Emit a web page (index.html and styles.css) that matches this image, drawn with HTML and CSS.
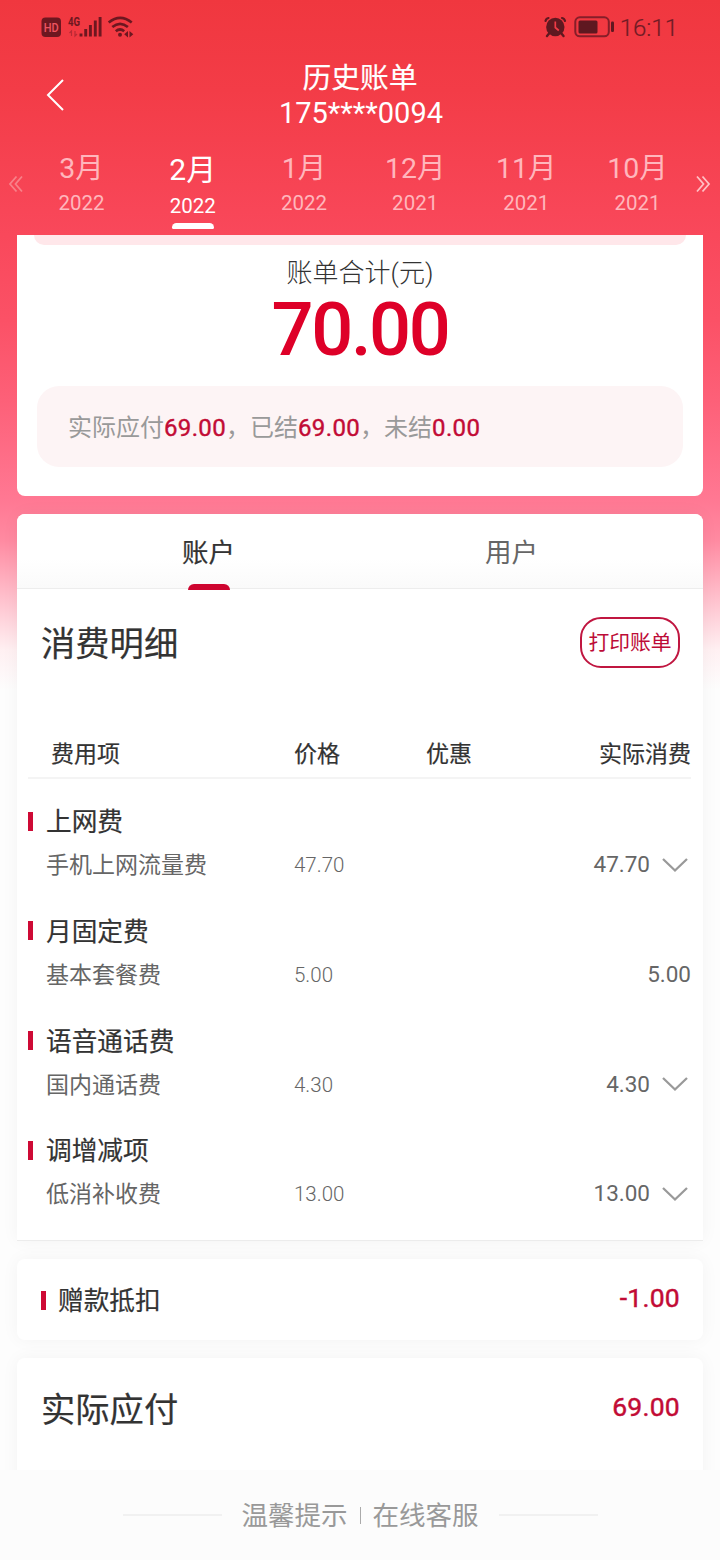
FILE: index.html
```html
<!DOCTYPE html>
<html lang="zh-CN">
<head>
<meta charset="utf-8">
<title>历史账单</title>
<link rel="stylesheet" href="styles.css">
</head>
<body>
<div class="page">
  <header class="header">
    <div class="status">
      <svg class="status-left" width="96" height="28" viewBox="40 14 96 28">
        <rect x="41.500" y="17.500" width="19.500" height="19.500" rx="4" fill="#6d1720"/>
        <text x="51.300" y="31.800" text-anchor="middle" font-size="12.500" textLength="15" lengthAdjust="spacingAndGlyphs" fill="#ee5560" font-weight="500">HD</text>
        <text x="68" y="26" font-size="12.500" textLength="12" lengthAdjust="spacingAndGlyphs" font-weight="700" fill="#6d1720">4G</text>
        <path d="M71.500 36v-5l-2 2M75 31v5l2-2" stroke="#b92935" stroke-width="1.200" fill="none"/>
        <path d="M81 33.500v3M85.700 29v7.500M90.400 25v11.500M95.300 20.500v16M100.100 17v19.500" stroke="#6d1720" stroke-width="2.900" fill="none"/>
        <g fill="none" stroke="#6d1720" stroke-width="2.700">
          <path d="M108.700 22.500q11.500-9.200 23 0M112.300 27q7.800-6.400 15.600 0M115.800 31.300q4.200-3.600 8.400 0"/>
        </g>
        <circle cx="120" cy="34.800" r="2" fill="#6d1720"/>
        <path d="M128 31v6.500l-3.800-3.200zM129.500 31v6.500l3.800-3.200z" fill="#6d1720"/>
      </svg>
      <div class="status-right">
        <svg width="72" height="28" viewBox="543 14 72 28">
          <g stroke="#5f1820" fill="none" stroke-linecap="round">
            <path d="M545.500 21q.5-2.500 3-3M565 21q-.5-2.500-3-3" stroke-width="2.200"/>
            <path d="M549.500 33l-2.500 3M561 33l2.500 3" stroke-width="2.400"/>
          </g>
          <circle cx="555.300" cy="27" r="9.200" fill="#5f1820"/>
          <path d="M555.300 21.500v6l3.500 3" stroke="#f03b45" stroke-width="1.700" fill="none"/>
          <rect x="575.300" y="17.300" width="33.500" height="19" rx="4.500" fill="none" stroke="#861e29" stroke-width="2"/>
          <rect x="578.500" y="20.500" width="19" height="13" rx="1.500" fill="#5f1820"/>
          <rect x="611" y="21.500" width="3" height="10.500" rx="1.200" fill="#5f1820"/>
        </svg>
        <span class="clock">16:11</span>
      </div>
    </div>
    <div class="titlebar">
      <svg class="back" width="20" height="34" viewBox="0 0 20 34"><path d="M18 2L3 17l15 15" fill="none" stroke="#fff" stroke-width="2"/></svg>
      <div class="titles">
        <div class="title">历史账单</div>
        <div class="phone">175****0094</div>
      </div>
    </div>
    <nav class="months">
      <svg class="arrow arrow-off" width="16" height="18" viewBox="0 0 16 18"><path d="M8.500 1.500L2 9l6.500 7.500M14 1.500L7.500 9l6.500 7.500"/></svg>
      <div class="month"><b>3月</b><span>2022</span></div>
      <div class="month active"><b>2月</b><span>2022</span></div>
      <div class="month"><b>1月</b><span>2022</span></div>
      <div class="month"><b>12月</b><span>2021</span></div>
      <div class="month"><b>11月</b><span>2021</span></div>
      <div class="month"><b>10月</b><span>2021</span></div>
      <svg class="arrow" width="16" height="18" viewBox="0 0 16 18"><path d="M2 1.500L8.500 9 2 16.500M7.500 1.500L14 9l-6.500 7.500"/></svg>
    </nav>
  </header>

  <main class="content">
    <section class="card total">
      <div class="strip"></div>
      <div class="total-label">账单合计(元)</div>
      <div class="total-value">70.00</div>
      <div class="summary">实际应付<em>69.00</em>，已结<em>69.00</em>，未结<em>0.00</em></div>
    </section>

    <section class="card detail">
      <div class="tabs">
        <div class="tab selected">账户</div>
        <div class="tab">用户</div>
      </div>
      <div class="detail-head">
        <h2>消费明细</h2>
        <button class="print">打印账单</button>
      </div>
      <div class="table">
        <div class="row thead"><span>费用项</span><span>价格</span><span>优惠</span><span>实际消费</span></div>
        <div class="group">
          <h3>上网费</h3>
          <div class="row item"><span>手机上网流量费</span><span class="price">47.70</span><span></span><span class="real">47.70<svg class="chev" width="28" height="16" viewBox="0 0 28 16"><path d="M2 2l12 11.500L26 2"/></svg></span></div>
        </div>
        <div class="group">
          <h3>月固定费</h3>
          <div class="row item"><span>基本套餐费</span><span class="price">5.00</span><span></span><span class="real">5.00</span></div>
        </div>
        <div class="group">
          <h3>语音通话费</h3>
          <div class="row item"><span>国内通话费</span><span class="price">4.30</span><span></span><span class="real">4.30<svg class="chev" width="28" height="16" viewBox="0 0 28 16"><path d="M2 2l12 11.500L26 2"/></svg></span></div>
        </div>
        <div class="group">
          <h3>调增减项</h3>
          <div class="row item"><span>低消补收费</span><span class="price">13.00</span><span></span><span class="real">13.00<svg class="chev" width="28" height="16" viewBox="0 0 28 16"><path d="M2 2l12 11.500L26 2"/></svg></span></div>
        </div>
      </div>
    </section>

    <section class="card line gift">
      <h3>赠款抵扣</h3>
      <span class="amount">-1.00</span>
    </section>

    <section class="card line due">
      <h2>实际应付</h2>
      <span class="amount">69.00</span>
    </section>
  </main>

  <footer class="footer">
    <i class="rule"></i>
    <span>温馨提示</span><i class="sep"></i><span>在线客服</span>
    <i class="rule"></i>
  </footer>
</div>
</body>
</html>
```

FILE: styles.css
```css
* { box-sizing: border-box; }
body {
  margin: 0;
  font-family: Roboto, "Noto Sans CJK SC", sans-serif;
  color: #333;
}
h2, h3 { margin: 0; font-weight: 400; }
em, i { font-style: normal; }

/* Slightly heavier than regular */
h2, h3, .thead, .selected, .title, .amount, .summary em { -webkit-text-stroke: 0.2px currentColor; }

.page {
  width: 720px;
  height: 1560px;
  overflow: hidden;
  display: flex;
  flex-direction: column;
  background: linear-gradient(180deg, #f0373f 0, #f33c47 90px, #f9485b 235px, #fb5166 320px, #fd6078 400px, #ff7893 500px, #ff8aa1 540px, #ffc2ce 600px, #fff0f2 650px, #fdfdfd 690px, #fdfdfd 100%);
}

/* Header */
.header { height: 235px; flex: none; color: #fff; }
.status {
  height: 54px;
  padding: 14px 42px 0 40px;
  display: flex;
  justify-content: space-between;
  align-items: flex-start;
}
.status-right { display: flex; color: #701b25; }
.clock { width: 63px; line-height: 29px; font-size: 24px; font-weight: 300; text-align: right; white-space: nowrap; -webkit-text-stroke: 0.2px currentColor; }
.titlebar { height: 76px; display: grid; grid-template-columns: 100px 1fr 100px; align-items: center; }
.back { margin: 6px 0 0 45px; }
.titles { text-align: center; padding-top: 5px; }
.title { font-size: 28.8px; line-height: 37px; }
.phone { font-size: 29px; line-height: 32px; padding-left: 2px; white-space: nowrap; }

.months {
  height: 105px;
  display: grid;
  grid-template-columns: 26px repeat(6, 111.2px) 1fr;
  color: #ffb6bc;
}
.month { display: flex; flex-direction: column; align-items: center; padding-top: 21px; }
.month b { font-size: 28.5px; font-weight: 400; line-height: 36px; }
.month span { font-size: 20.5px; line-height: 28px; margin-top: 2px; }
.active { color: #fff; padding-top: 22px; }
.active b { font-size: 30px; }
.active span { margin-top: 4px; }
.active::after { content: ""; width: 42px; height: 6px; margin-top: 3px; border-radius: 6px 6px 2px 2px; background: #fff; }
.arrow { margin: 45px 0 0 8px; fill: none; stroke: #ffc0c4; stroke-width: 1.800; }
.months .arrow:last-child { margin-left: 2px; }
.arrow-off { stroke: #f88189; }

/* Cards */
.content { height: 1235px; flex: none; padding: 0 17px; display: flex; flex-direction: column; gap: 18px; overflow: hidden; }
.card { background: #fff; border-radius: 8px; width: 686px; flex: none; box-shadow: 0 0 18px rgba(0, 0, 0, .045); }
.total { height: 261px; border-radius: 0 0 8px 8px; text-align: center; box-shadow: none; }
.strip { height: 10px; margin: 0 17px; background: #ffe7ea; border-radius: 0 0 10px 10px; }
.total-label { height: 56px; line-height: 57px; font-size: 26px; font-weight: 300; }
.total-value { height: 58px; line-height: 58px; font-size: 74px; font-weight: 500; letter-spacing: -2.4px; color: #de0028; }
.summary {
  height: 81px;
  margin: 27px 20px 0;
  padding-left: 31px;
  border-radius: 22px;
  background: #fdf4f5;
  text-align: left;
  line-height: 85px;
  font-size: 24px;
  color: #999;
}
.summary em { color: #c20b35; letter-spacing: 0.35px; -webkit-text-stroke-width: 0.4px; }

.detail { height: 727px; border-bottom: 1px solid #ececec; border-radius: 8px 8px 0 0; }
.tabs {
  height: 75px;
  padding: 0 40px;
  display: grid;
  grid-template-columns: 303px 303px;
  border-bottom: 1px solid #ededed;
  border-radius: 8px 8px 0 0;
  background: linear-gradient(180deg, #fff 60%, #fafafa);
}
.tab { height: 75px; display: flex; flex-direction: column; align-items: center; line-height: 78px; font-size: 26.500px; color: #666; }
.selected { color: #333; }
.selected::after { content: ""; width: 42px; height: 6px; flex: none; margin-top: -8px; background: #ce0530; border-radius: 6px 6px 0 0; }
.detail-head { height: 107px; padding: 0 23px 0 24px; display: flex; align-items: center; justify-content: space-between; }
h2 { font-size: 34.300px; line-height: 50px; padding-top: 2px; }
.print {
  width: 100px;
  height: 51px;
  padding: 0 0 3px;
  border: 2px solid #c01640;
  border-radius: 21px;
  background: #fff;
  color: #bd0c37;
  font: 400 20.800px/44px "Noto Sans CJK SC", sans-serif;
}
.table { padding: 34px 12px 0 11px; }
.row { display: grid; grid-template-columns: 248px 133px 128px 1fr; padding-left: 18px; white-space: nowrap; }
.thead { height: 49px; line-height: 50px; padding-left: 23px; grid-template-columns: 243px 132px 118px 1fr; border-bottom: 2px solid #f4f4f4; font-size: 23px; }
.thead span:last-child { text-align: right; }
.group { height: 109.8px; padding-top: 24px; }
h3 { display: flex; align-items: center; gap: 13px; font-size: 25.700px; line-height: 38px; }
h3::before { content: ""; width: 5px; height: 19px; margin-top: -2px; background: #ce0a35; }
.item { height: 46px; line-height: 50px; font-size: 23px; color: #666; }
.price { font-size: 20.500px; font-weight: 300; line-height: 48px; }
.real { display: flex; justify-content: flex-end; align-items: center; font-size: 22.500px; line-height: 46px; height: 46px; }
.chev { margin: 1px 2px 0 11px; fill: none; stroke: #999; stroke-width: 2.300; }

.line { display: flex; justify-content: space-between; padding: 0 23px 0 24px; }
.amount { color: #c20b35; font-size: 26.500px; line-height: 38px; letter-spacing: 0.25px; -webkit-text-stroke-width: 0.45px; }
.gift { height: 81px; padding-top: 20px; }
.gift h3 { height: 44px; gap: 12px; line-height: 46px; }
.due { height: 140px; padding-top: 24px; }
.due h2 { padding-top: 3px; }
.due .amount { line-height: 49px; }

/* Footer */
.footer {
  height: 90px;
  background: #fcfcfc;
  display: flex;
  align-items: center;
  justify-content: center;
  font-size: 26.500px;
  color: #999;
}
.footer span { line-height: 90px; padding-top: 2px; }
.rule { width: 99px; height: 2px; background: #f1f1f1; }
.rule:first-child { margin-right: 20px; }
.rule:last-child { margin-left: 20px; }
.sep { width: 1px; height: 17px; margin: 0 12px; background: #aaa; }
```
